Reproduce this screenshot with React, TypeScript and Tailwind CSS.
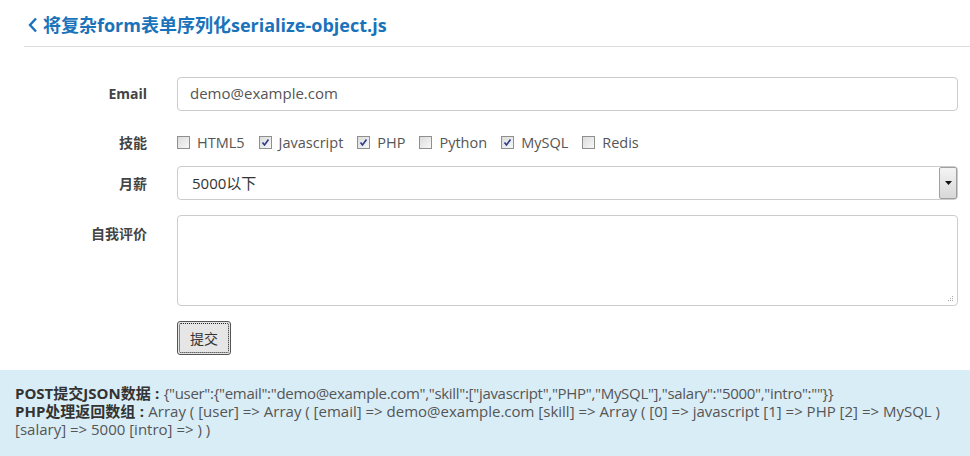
import React from "react";

const font = { fontFamily: '"Open Sans", "Noto Sans CJK SC", sans-serif' };

function Box({ checked }: { checked: boolean }) {
  return (
    <span className="relative inline-block w-[13px] h-[13px] border border-[#8e8f8f] bg-gradient-to-br from-[#dcdcdc] to-[#f7f7f7] shrink-0">
      {checked && (
        <svg viewBox="0 0 11 11" className="absolute left-0 top-0 w-[11px] h-[11px]">
          <path d="M2.5 5.5 L4.5 8 L8.5 2.5" fill="none" stroke="#2a3a8c" strokeWidth="1.6" />
        </svg>
      )}
    </span>
  );
}

const skills: [string, boolean][] = [
  ["HTML5", false],
  ["Javascript", true],
  ["PHP", true],
  ["Python", false],
  ["MySQL", true],
  ["Redis", false],
];

export default function App() {
  return (
    <div className="w-[970px] h-[456px] bg-white overflow-hidden text-[#555]" style={font}>
      <div className="ml-[24px] h-[47px] border-b border-[#ddd] flex items-center pt-[4px]">
        <svg viewBox="0 0 10 16" className="w-[10px] h-[16px] ml-[4px] mr-[5px]">
          <path d="M8 1.5 L2 8 L8 14.5" fill="none" stroke="#1a73ba" strokeWidth="2.4" />
        </svg>
        <span className="text-[18px] font-bold text-[#1a73ba]">将复杂form表单序列化serialize-object.js</span>
      </div>

      <div className="grid grid-cols-[147px_781px] gap-x-[30px] mt-[30px]">
        <div className="h-[34px] flex items-center justify-end text-[14px] font-bold text-[#444] pb-[2px]">Email</div>
        <div className="h-[34px] border border-[#ccc] rounded-[4px] flex items-center px-[12px] pb-[2px] text-[15px] text-[#555]">demo@example.com</div>

        <div className="h-[57px] pt-[6px] flex items-center justify-end text-[14px] font-bold text-[#444]">技能</div>
        <div className="h-[57px] pt-[6px] flex items-center text-[14.5px] text-[#555]">
          {skills.map(([s, c]) => (
            <span key={s} className="flex items-center mr-[14px]">
              <Box checked={c} />
              <span className="ml-[7px]">{s}</span>
            </span>
          ))}
        </div>

        <div className="h-[34px] flex items-center justify-end text-[14px] font-bold text-[#444] -mt-[2px]">月薪</div>
        <div className="h-[34px] border border-[#ccc] rounded-[4px] flex items-center pl-[14px] text-[15px] text-[#333] -mt-[2px] relative">
          <span className="flex-1">5000以下</span>
          <span className="w-[18px] h-[32px] border border-[#a0a0a0] rounded-[2px] bg-gradient-to-b from-[#f4f4f4] to-[#d8d8d8] flex items-center justify-center">
            <svg viewBox="0 0 7 4" className="w-[7px] h-[4px]">
              <path d="M0 0 L7 0 L3.5 4 Z" fill="#111" />
            </svg>
          </span>
        </div>

        <div className="pt-[8px] flex justify-end text-[14px] font-bold text-[#444] mt-[15px]">自我评价</div>
        <div className="h-[91px] border border-[#ccc] rounded-[4px] mt-[15px] relative">
          <svg viewBox="0 0 6 6" className="absolute right-[3px] bottom-[3px] w-[6px] h-[6px]">
            <rect x="4" y="0" width="1" height="1" fill="#aaa" />
            <rect x="2" y="2" width="1" height="1" fill="#aaa" />
            <rect x="4" y="2" width="1" height="1" fill="#aaa" />
            <rect x="0" y="4" width="1" height="1" fill="#aaa" />
            <rect x="2" y="4" width="1" height="1" fill="#aaa" />
            <rect x="4" y="4" width="1" height="1" fill="#aaa" />
          </svg>
        </div>

        <div />
        <div className="mt-[15px]">
          <div className="w-[54px] h-[34px] rounded-[3px] border border-[#555] bg-[#e6e6e6] flex items-center justify-center p-[1px]">
            <div className="w-full h-full border border-dotted border-[#222] rounded-[2px] flex items-center justify-center text-[14px] text-[#333]">提交</div>
          </div>
        </div>
      </div>

      <div className="mt-[15px] bg-[#d9edf7] h-[90px] px-[15px] pt-[14px] text-[15px] leading-[18px] text-[#555]">
        <div>
          <b className="text-[#333]">POST提交JSON数据</b>
          <b className="inline-block w-[13px] text-center text-[#333]">:</b>
          <span className="tracking-[-0.3px]">{'{"user":{"email":"demo@example.com","skill":["javascript","PHP","MySQL"],"salary":"5000","intro":""}}'}</span>
        </div>
        <div>
          <b className="text-[#333]">PHP处理返回数组</b>
          <b className="inline-block w-[13px] text-center text-[#333]">:</b>
          Array ( [user] =&gt; Array ( [email] =&gt; demo@example.com [skill] =&gt; Array ( [0] =&gt; javascript [1] =&gt; PHP [2] =&gt; MySQL ) [salary] =&gt; 5000 [intro] =&gt; ) )
        </div>
      </div>
    </div>
  );
}
